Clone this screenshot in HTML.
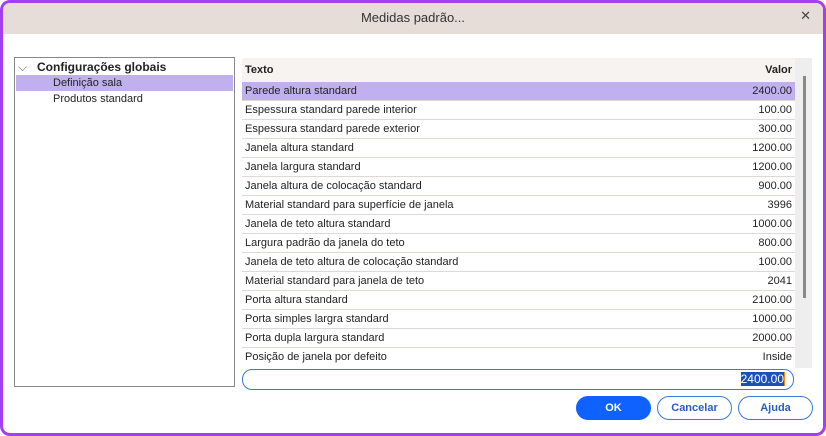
<!DOCTYPE html><html><head><style>
*{margin:0;padding:0;box-sizing:border-box}
body{width:826px;height:436px;background:#fff;font-family:"Liberation Sans",sans-serif;font-size:11px;color:#222;position:relative;overflow:hidden}
.frame{position:absolute;left:0;top:0;width:826px;height:436px;border:3px solid #a33ff0;border-radius:10px;overflow:hidden;background:#fff}
.title{position:absolute;left:0;top:0;right:0;height:31px;background:#e6dcd8;text-align:center;line-height:29px;font-size:13px;color:#333}
.x{position:absolute;right:12px;top:5px;font-size:13px;color:#444;font-weight:300}
.tree{position:absolute;left:11px;top:54px;width:221px;height:330px;border:1px solid #888;background:#fff}
.tree div{position:absolute;left:1px;right:1px;height:16px;line-height:16px}
.tbl{position:absolute;left:239px;top:55px;width:570px;height:310px;background:#eee}
.hdr{position:absolute;left:0;top:0;width:553px;height:24px;background:#f7f3f0;font-weight:bold;line-height:24px}
.row{position:absolute;left:0;width:553px;height:19px;line-height:18px;background:#fff;border-bottom:1px solid #e0d8d4}
.row span,.hdr span{position:absolute}
.l{left:3px}.r{right:3px}
.sb{position:absolute;left:561px;top:18px;width:3px;height:222px;background:#888}
.inp{position:absolute;left:239px;top:366px;width:552px;height:21px;border:1px solid #3a78d8;border-radius:10px;text-align:right;padding-right:8px;line-height:19px;font-size:12px}
.inp b{font-weight:normal;background:#1e4fb8;color:#fff;border-right:1px solid #f80}
.btn{position:absolute;top:393px;width:75px;height:24px;border-radius:12px;border:1px solid #3a78d8;color:#2a5cc0;font-weight:bold;text-align:center;line-height:22px}
</style></head><body><div class="frame">
<div class="title">Medidas padrão...</div><div class="x">✕</div>
<div class="tree">
<div style="top:1px;font-weight:bold;font-size:12px"><span style="position:absolute;left:2px;color:#666;font-weight:normal">⌵</span><span style="position:absolute;left:21px">Configurações globais</span></div>
<div style="top:17px;background:#c0b0f0"><span style="position:absolute;left:37px">Definição sala</span></div>
<div style="top:33px"><span style="position:absolute;left:37px">Produtos standard</span></div>
</div>
<div class="tbl">
<div class="hdr"><span class="l">Texto</span><span class="r">Valor</span></div>
<div class="row" style="top:24px;background:#c0b0f0"><span class="l">Parede altura standard</span><span class="r">2400.00</span></div>
<div class="row" style="top:43px"><span class="l">Espessura standard parede interior</span><span class="r">100.00</span></div>
<div class="row" style="top:62px"><span class="l">Espessura standard parede exterior</span><span class="r">300.00</span></div>
<div class="row" style="top:81px"><span class="l">Janela altura standard</span><span class="r">1200.00</span></div>
<div class="row" style="top:100px"><span class="l">Janela largura standard</span><span class="r">1200.00</span></div>
<div class="row" style="top:119px"><span class="l">Janela altura de colocação standard</span><span class="r">900.00</span></div>
<div class="row" style="top:138px"><span class="l">Material standard para superfície de janela</span><span class="r">3996</span></div>
<div class="row" style="top:157px"><span class="l">Janela de teto altura standard</span><span class="r">1000.00</span></div>
<div class="row" style="top:176px"><span class="l">Largura padrão da janela do teto</span><span class="r">800.00</span></div>
<div class="row" style="top:195px"><span class="l">Janela de teto altura de colocação standard</span><span class="r">100.00</span></div>
<div class="row" style="top:214px"><span class="l">Material standard para janela de teto</span><span class="r">2041</span></div>
<div class="row" style="top:233px"><span class="l">Porta altura standard</span><span class="r">2100.00</span></div>
<div class="row" style="top:252px"><span class="l">Porta simples largra standard</span><span class="r">1000.00</span></div>
<div class="row" style="top:271px"><span class="l">Porta dupla largura standard</span><span class="r">2000.00</span></div>
<div class="row" style="top:290px;border:none;height:20px"><span class="l">Posição de janela por defeito</span><span class="r">Inside</span></div>
<div class="sb"></div>
</div>
<div class="inp"><b>2400.00</b></div>
<div class="btn" style="left:573px;background:#0f62fe;border-color:#0f62fe;color:#fff">OK</div>
<div class="btn" style="left:654px">Cancelar</div>
<div class="btn" style="left:735px">Ajuda</div>
</div></body></html>
